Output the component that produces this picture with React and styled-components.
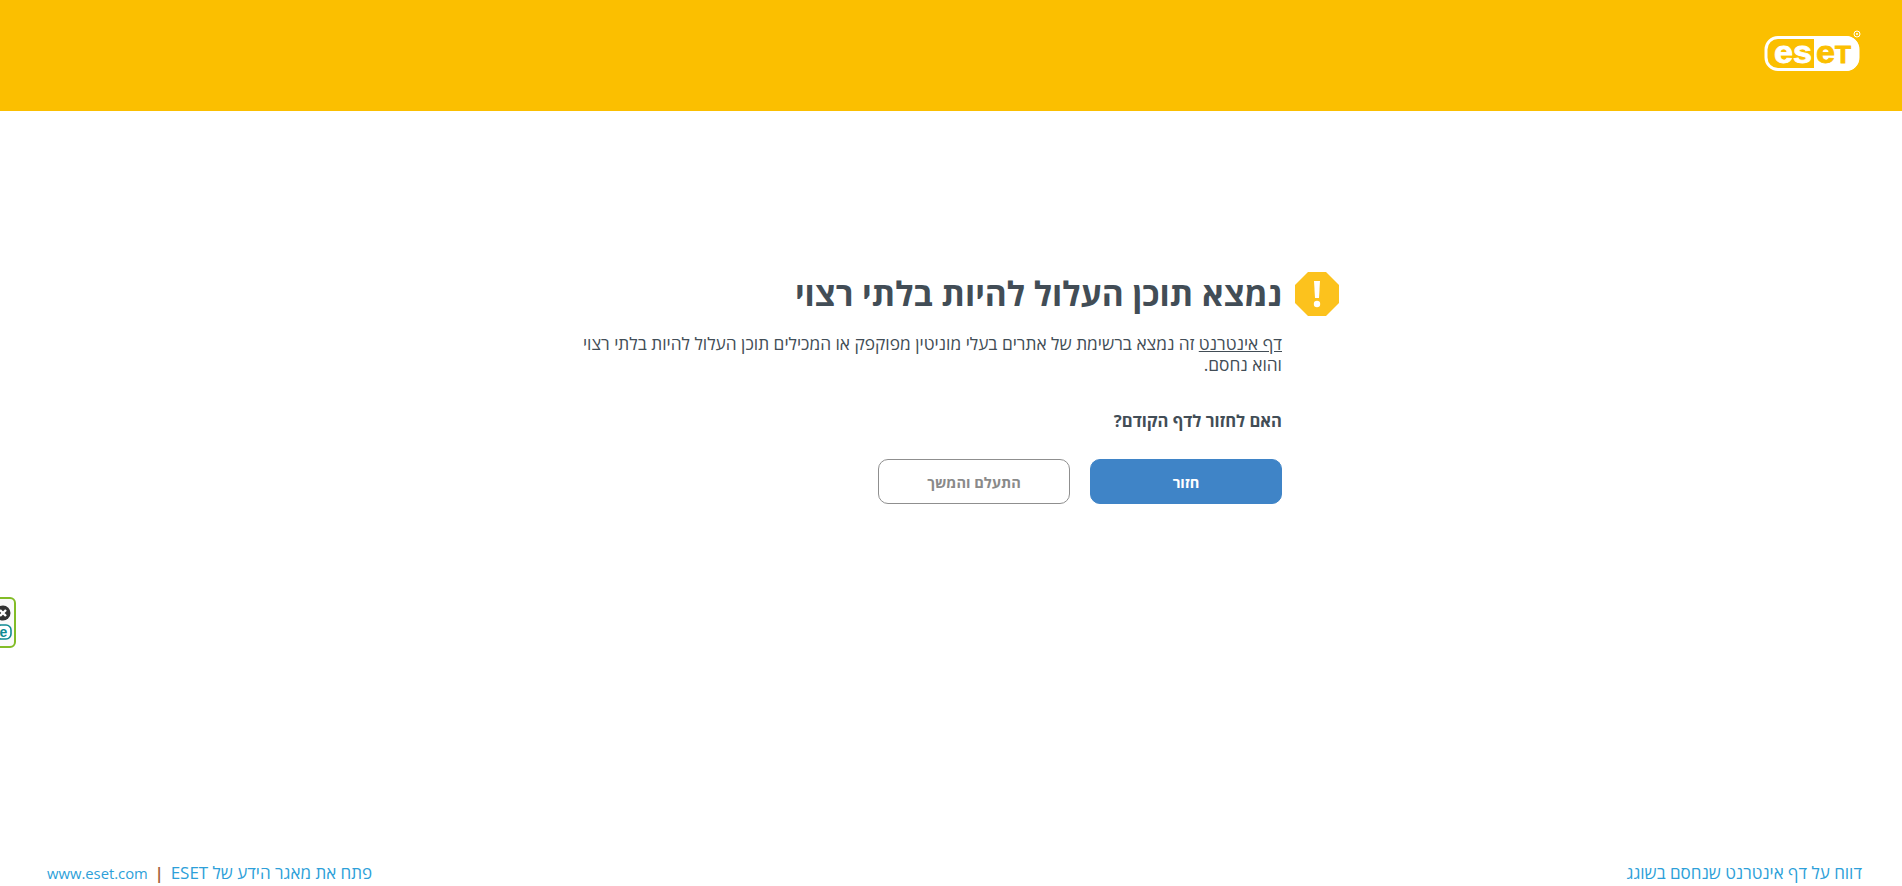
import React from 'react';
import styled, { createGlobalStyle } from 'styled-components';

const GlobalStyle = createGlobalStyle`
  html, body { margin: 0; padding: 0; background: #fff; }
  body { font-family: "Open Sans", "Noto Sans", "Liberation Sans", sans-serif; color: #424d56; }
`;

const Page = styled.div`
  height: 886px;
  display: flex;
  flex-direction: column;
  overflow: hidden;
`;

const Header = styled.header`
  height: 111px;
  flex: none;
  background: #fbbf00;
  display: flex;
  align-items: flex-start;
  justify-content: flex-end;
  padding: 28px 38px 0 0;
  box-sizing: border-box;
`;

const Main = styled.main`
  flex: 1;
  padding: 160px 0 0 576px;
`;

const Content = styled.div`
  width: 706px;
  direction: rtl;
`;

const TitleRow = styled.div`
  display: flex;
  align-items: center;
  gap: 13px;
  margin-right: -57px;
`;

const Title = styled.h1`
  margin: 0;
  font-size: 33.5px;
  line-height: 45px;
  font-weight: 700;
  white-space: nowrap;
  color: #424d56;
`;

const Body = styled.p`
  margin: 17px 0 0;
  font-size: 17.3px;
  line-height: 21px;
  color: #424d56;
`;

const PageLink = styled.a`
  color: #424d56;
  text-decoration: underline;
`;

const Question = styled.p`
  margin: 34px 0 0;
  font-size: 16.6px;
  line-height: 24px;
  font-weight: 700;
`;

const Buttons = styled.div`
  display: flex;
  gap: 20px;
  margin-top: 26px;
`;

const Button = styled.button`
  width: 192px;
  height: 45px;
  box-sizing: border-box;
  border-radius: 10px;
  font-family: inherit;
  font-size: 14.6px;
  font-weight: 700;
  padding: 0;
  border: 1px solid ${(p) => (p.$primary ? '#3f84c7' : '#8f8f8f')};
  background: ${(p) => (p.$primary ? '#3f84c7' : '#fff')};
  color: ${(p) => (p.$primary ? '#fff' : '#8a8a8a')};
`;

const Footer = styled.footer`
  flex: none;
  height: 26px;
  display: flex;
  justify-content: space-between;
  padding: 0 40px 0 47px;
  line-height: 26px;
`;

const FooterGroup = styled.div`
  display: flex;
  align-items: flex-start;
  gap: 7px;
`;

const FooterLink = styled.a`
  color: #2d9fd9;
  direction: rtl;
  font-size: ${(p) => (p.$latin ? '14.8px' : '17px')};
`;

const Divider = styled.span`
  color: #a5673f;
  font-size: 16px;
  font-weight: 700;
`;

const SideTab = styled.div`
  position: absolute;
  left: -10px;
  top: 597px;
  width: 26px;
  height: 51px;
  box-sizing: border-box;
  border: 2px solid #82bc26;
  border-radius: 6px;
  background: #fafafa;
  display: flex;
  flex-direction: column;
  align-items: center;
  justify-content: center;
  gap: 3px;
`;

const EsetLogo = () => (
  <svg width="100" height="46" viewBox="0 0 100 46">
    <rect x="2" y="9.5" width="92" height="32" rx="12" fill="#fbbf00" stroke="#fff" strokeWidth="3" />
    <path d="M50 8h32a13 13 0 0 1 13 13v9a13 13 0 0 1-13 13H50z" fill="#fff" />
    <text x="10" y="34.5" fontFamily="'Liberation Sans', sans-serif" fontWeight="700" fontSize="32" fill="#fff" stroke="#fff" strokeWidth="0.8" textLength="38" lengthAdjust="spacingAndGlyphs">es</text>
    <text x="52" y="34.5" fontFamily="'Liberation Sans', sans-serif" fontWeight="700" fontSize="32" fill="#fbbf00" stroke="#fbbf00" strokeWidth="0.8" textLength="19" lengthAdjust="spacingAndGlyphs">e</text>
    <text x="71" y="34.5" fontFamily="'Liberation Sans', sans-serif" fontWeight="700" fontSize="23" fill="#fbbf00" stroke="#fbbf00" strokeWidth="0.8" textLength="16" lengthAdjust="spacingAndGlyphs">T</text>
    <circle cx="93" cy="6" r="3" fill="none" stroke="#fff" strokeWidth="1" />
    <circle cx="93" cy="6" r="1" fill="#fff" />
  </svg>
);

const WarningIcon = () => (
  <svg width="44" height="44" viewBox="0 0 44 44">
    <path d="M13 0h18l13 13v18L31 44H13L0 31V13z" fill="#fcc21d" />
    <path d="M19 9h6l-1 17h-4z" fill="#fff" />
    <circle cx="22" cy="32" r="3.2" fill="#fff" />
  </svg>
);

const TabIcons = () => (
  <>
    <svg width="16" height="16" viewBox="0 0 16 16">
      <circle cx="8" cy="8" r="7.5" fill="#333" />
      <path d="M5 5l6 6M11 5l-6 6" stroke="#fff" strokeWidth="2.4" />
    </svg>
    <svg width="17" height="16" viewBox="0 0 17 16">
      <rect x="1" y="1" width="15" height="14" rx="5" fill="#fff" stroke="#0f8a93" strokeWidth="1.6" />
      <text x="8.5" y="12.5" textAnchor="middle" fontFamily="'Liberation Sans', sans-serif" fontWeight="700" fontSize="14" fill="#0f8a93">e</text>
    </svg>
  </>
);

export default function App() {
  return (
    <Page>
      <GlobalStyle />
      <Header>
        <EsetLogo />
      </Header>
      <Main>
        <Content>
          <TitleRow>
            <WarningIcon />
            <Title>נמצא תוכן העלול להיות בלתי רצוי</Title>
          </TitleRow>
          <Body>
            <PageLink>דף אינטרנט</PageLink> זה נמצא ברשימת של אתרים בעלי מוניטין מפוקפק או המכילים תוכן העלול להיות בלתי רצוי והוא נחסם.
          </Body>
          <Question>האם לחזור לדף הקודם?</Question>
          <Buttons>
            <Button $primary>חזור</Button>
            <Button>התעלם והמשך</Button>
          </Buttons>
        </Content>
      </Main>
      <Footer>
        <FooterGroup>
          <FooterLink $latin>www.eset.com</FooterLink>
          <Divider>|</Divider>
          <FooterLink>פתח את מאגר הידע של ESET</FooterLink>
        </FooterGroup>
        <FooterLink>דווח על דף אינטרנט שנחסם בשוגג</FooterLink>
      </Footer>
      <SideTab>
        <TabIcons />
      </SideTab>
    </Page>
  );
}
